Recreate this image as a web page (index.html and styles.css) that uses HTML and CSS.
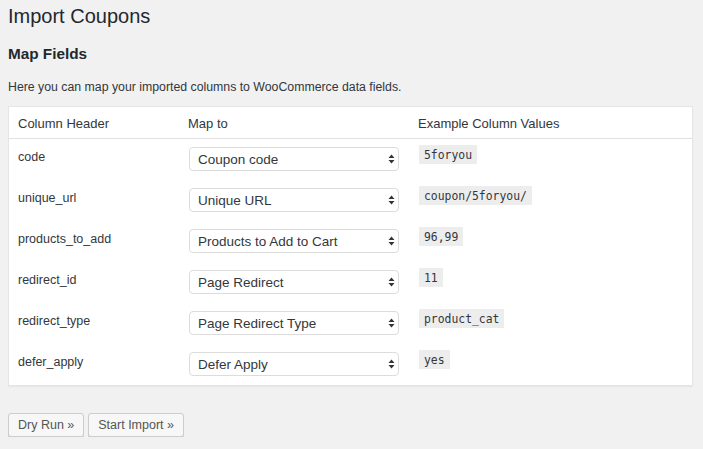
FILE: index.html
```html
<!DOCTYPE html>
<html lang="en">
<head>
<meta charset="utf-8">
<title>Import Coupons</title>
<link rel="stylesheet" href="styles.css">
</head>
<body>
<div class="wrap">
  <h1 class="page-title">Import Coupons</h1>
  <h2 class="section-title">Map Fields</h2>
  <p class="description">Here you can map your imported columns to WooCommerce data fields.</p>

  <table class="map-table">
    <thead>
      <tr>
        <th class="col-header">Column Header</th>
        <th class="col-map">Map to</th>
        <th class="col-example">Example Column Values</th>
      </tr>
    </thead>
    <tbody>
      <tr>
        <td class="label">code</td>
        <td><div class="select"><span>Coupon code</span><svg class="arrows" width="7" height="10" viewBox="0 0 7 10"><path d="M3.5 0.5 L6.5 4 H0.5 Z M3.5 9.5 L6.5 6 H0.5 Z" fill="#333"/></svg></div></td>
        <td><code class="chip">5foryou</code></td>
      </tr>
      <tr>
        <td class="label">unique_url</td>
        <td><div class="select"><span>Unique URL</span><svg class="arrows" width="7" height="10" viewBox="0 0 7 10"><path d="M3.5 0.5 L6.5 4 H0.5 Z M3.5 9.5 L6.5 6 H0.5 Z" fill="#333"/></svg></div></td>
        <td><code class="chip">coupon/5foryou/</code></td>
      </tr>
      <tr>
        <td class="label">products_to_add</td>
        <td><div class="select"><span>Products to Add to Cart</span><svg class="arrows" width="7" height="10" viewBox="0 0 7 10"><path d="M3.5 0.5 L6.5 4 H0.5 Z M3.5 9.5 L6.5 6 H0.5 Z" fill="#333"/></svg></div></td>
        <td><code class="chip">96,99</code></td>
      </tr>
      <tr>
        <td class="label">redirect_id</td>
        <td><div class="select"><span>Page Redirect</span><svg class="arrows" width="7" height="10" viewBox="0 0 7 10"><path d="M3.5 0.5 L6.5 4 H0.5 Z M3.5 9.5 L6.5 6 H0.5 Z" fill="#333"/></svg></div></td>
        <td><code class="chip">11</code></td>
      </tr>
      <tr>
        <td class="label">redirect_type</td>
        <td><div class="select"><span>Page Redirect Type</span><svg class="arrows" width="7" height="10" viewBox="0 0 7 10"><path d="M3.5 0.5 L6.5 4 H0.5 Z M3.5 9.5 L6.5 6 H0.5 Z" fill="#333"/></svg></div></td>
        <td><code class="chip">product_cat</code></td>
      </tr>
      <tr>
        <td class="label">defer_apply</td>
        <td><div class="select"><span>Defer Apply</span><svg class="arrows" width="7" height="10" viewBox="0 0 7 10"><path d="M3.5 0.5 L6.5 4 H0.5 Z M3.5 9.5 L6.5 6 H0.5 Z" fill="#333"/></svg></div></td>
        <td><code class="chip">yes</code></td>
      </tr>
    </tbody>
  </table>

  <div class="actions">
    <button class="button">Dry Run &raquo;</button>
    <button class="button">Start Import &raquo;</button>
  </div>
</div>
</body>
</html>
```

FILE: styles.css
```css
html, body {
  margin: 0;
  padding: 0;
  background: #f1f1f1;
}
body {
  font-family: "Liberation Sans", Arial, sans-serif;
  color: #23282d;
  font-size: 13px;
}
.wrap {
  width: 685px;
  margin-left: 8px;
}
.page-title {
  margin: 0;
  padding-top: 1px;
  font-size: 20px;
  font-weight: 400;
  line-height: 30px;
  color: #23282d;
}
.section-title {
  margin: 13px 0 0;
  font-size: 15.3px;
  font-weight: 700;
  line-height: 20px;
}
.description {
  margin: 14px 0 0;
  font-size: 12.3px;
  line-height: 18px;
  color: #32373c;
}
.map-table {
  margin-top: 10px;
  width: 100%;
  border-collapse: collapse;
  background: #fff;
  border: 1px solid #e5e5e5;
  box-shadow: 0 1px 1px rgba(0,0,0,0.04);
}
.map-table th {
  text-align: left;
  font-weight: 400;
  font-size: 13px;
  line-height: 19px;
  padding: 7px 10px 5px 9px;
  color: #32373c;
  border-bottom: 1px solid #e1e1e1;
}
.col-header { width: 151px; }
.col-map { width: 210px; }
.map-table td {
  vertical-align: top;
  padding: 8px 10px 9px;
  height: 24px;
  color: #32373c;
}
.map-table td.label {
  padding-left: 9px;
  font-size: 12.5px;
  line-height: 20px;
}
.select {
  box-sizing: border-box;
  width: 210px;
  height: 24px;
  display: flex;
  align-items: center;
  justify-content: space-between;
  padding: 0 3px 0 8px;
  border: 1px solid #dcdcdc;
  border-radius: 4px;
  background: #fff;
  font-size: 13.5px;
  color: #32373c;
}
.arrows {
  display: block;
}
.chip {
  display: inline-block;
  margin-top: -3px;
  padding: 3px 5px 2px;
  font-family: "DejaVu Sans Mono", "Liberation Mono", monospace;
  font-size: 11.4px;
  line-height: 14px;
  background: rgba(0,0,0,0.07);
  color: #32373c;
}
.actions {
  margin-top: 27px;
  display: flex;
  gap: 4px;
}
.button {
  box-sizing: border-box;
  height: 24px;
  padding: 0 9px;
  font-family: "Liberation Sans", Arial, sans-serif;
  font-size: 12.5px;
  color: #555;
  background: #f7f7f7;
  border: 1px solid #ccc;
  border-radius: 3px;
  box-shadow: 0 1px 0 #ccc;
  cursor: pointer;
}
```
